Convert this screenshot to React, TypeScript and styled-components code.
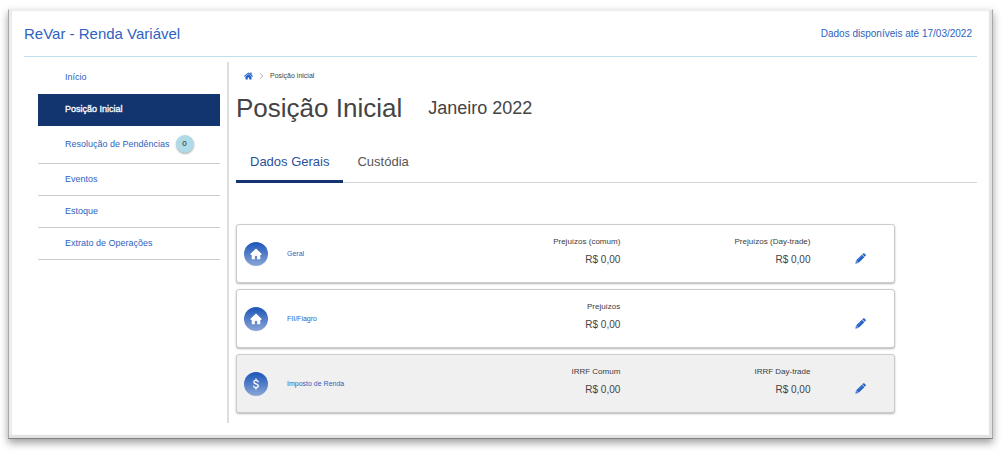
import React from "react";
import styled, { createGlobalStyle, css } from "styled-components";

const blue = "#2f62c0";
const navy = "#12356f";
const ink = "#444444";

const GlobalStyle = createGlobalStyle`
  *, *::before, *::after { box-sizing: border-box; }
  body {
    margin: 0;
    background: #ffffff;
    color: ${ink};
    font-family: "Liberation Sans", Arial, sans-serif;
  }
  h1, h2, p, ul, ol, dl, dd { margin: 0; padding: 0; font-weight: 400; }
  ul, ol { list-style: none; }
  a { color: inherit; text-decoration: none; }
  button { border: 0; padding: 0; background: none; font: inherit; color: inherit; cursor: pointer; }
`;

const Page = styled.div`
  padding: 9px 11px 12px 8px;
`;

const Frame = styled.div`
  border: 1px solid;
  border-color: #f0f0f0 #a8a8a8 #808080 #a8a8a8;
  box-shadow: inset -3px -3px 1px #e2e2e2, inset 3px 1px 1px #ececec,
    0 4px 8px rgba(0, 0, 0, 0.38);
  padding: 1px 15px 15px;
`;

const Header = styled.header`
  display: flex;
  align-items: center;
  justify-content: space-between;
  height: 46px;
  padding-right: 5px;
  border-bottom: 1px solid #bfdfeb;
  color: ${blue};
`;

const Brand = styled.h2`
  font-size: 15px;
  line-height: 20px;
`;

const Availability = styled.p`
  font-size: 10px;
  line-height: 14px;
`;

const Body = styled.div`
  display: flex;
  padding-top: 5px;
`;

const Sidebar = styled.nav`
  flex: none;
  width: 205px;
  padding: 0 7px 0 14px;
  border-right: 2px solid #dddddd;
`;

const MenuLink = styled.a<{ $active?: boolean; $tall?: boolean }>`
  display: flex;
  align-items: center;
  gap: 6px;
  height: ${(p) => (p.$tall ? 38 : 32)}px;
  padding: 0 0 2px 27px;
  border-bottom: 1px solid #cccccc;
  color: ${blue};
  font-size: 9px;
  line-height: 12px;
  ${(p) =>
    p.$active &&
    css`
      background: ${navy};
      border-color: ${navy};
      color: #ffffff;
      -webkit-text-stroke: 0.3px #ffffff;
    `}
`;

const MenuItemRow = styled.li`
  &:first-child a { border-color: transparent; }
`;

const Count = styled.span`
  display: grid;
  place-items: center;
  width: 18px;
  height: 18px;
  border-radius: 50%;
  background: #afdbe8;
  box-shadow: 0 1px 2px rgba(0, 0, 0, 0.35);
  color: #222222;
  font-size: 8px;
`;

const Content = styled.main`
  flex: 1;
  min-width: 0;
  padding: 7px 0 10px 7px;
`;

const Crumbs = styled.ol`
  display: flex;
  align-items: center;
  gap: 6px;
  height: 14px;
  padding-left: 8px;
  font-size: 7px;
  line-height: 14px;

  li, a { display: flex; align-items: center; }
`;

const TitleRow = styled.div`
  display: flex;
  align-items: center;
  gap: 26px;
  height: 50px;
`;

const Title = styled.h1`
  font-size: 26px;
  line-height: 32px;
`;

const Month = styled.p`
  font-size: 18px;
  line-height: 24px;
`;

const Tabs = styled.div`
  display: flex;
  margin-top: 10px;
  border-bottom: 1px solid #d4d4d4;
`;

const Tab = styled.button<{ $active?: boolean }>`
  height: 40px;
  margin-bottom: -1px;
  padding: 0 14px;
  border-bottom: 3px solid ${(p) => (p.$active ? navy : "transparent")};
  color: ${(p) => (p.$active ? "#2a519b" : "#555555")};
  font-size: 13px;
  line-height: 16px;
`;

const Cards = styled.ul`
  display: grid;
  gap: 6px;
  width: 89%;
  margin-top: 41px;
`;

const Card = styled.li<{ $shaded?: boolean }>`
  display: grid;
  grid-template-columns: 43px 143fr 190fr 190fr 56px;
  height: 59px;
  padding: 0 28px 0 7px;
  border: 1px solid #cccccc;
  border-radius: 3px;
  background: ${(p) => (p.$shaded ? "#f0f0f0" : "#ffffff")};
  box-shadow: 0 1px 2px rgba(0, 0, 0, 0.3);
`;

const Disc = styled.span`
  display: grid;
  place-items: center;
  align-self: center;
  width: 24px;
  height: 24px;
  border-radius: 50%;
  background: linear-gradient(#1a54b8, #8ba6d6);
`;

const CardLink = styled.a`
  align-self: center;
  color: ${blue};
  font-size: 7px;
  line-height: 12px;
`;

const Amount = styled.dl`
  padding-top: 11px;
  text-align: right;
`;

const AmountLabel = styled.dt`
  color: #3c3c3c;
  font-size: 8px;
  line-height: 12px;
`;

const AmountValue = styled.dd`
  margin-top: 4px;
  font-size: 10px;
  line-height: 16px;
`;

const EditButton = styled.button`
  justify-self: end;
  align-self: center;
  display: flex;
  padding-top: 10px;
`;

const HomeIcon = () => (
  <svg width="12" height="12" viewBox="0 0 24 24" fill="#ffffff" aria-hidden="true">
    <path d="M12 1 23.500 12 22 14H20.500V22.500H14.200V15.800H9.800V22.500H3.500V14H2L.5 12Z" />
  </svg>
);

const CrumbHomeIcon = () => (
  <svg width="9" height="8" viewBox="0 0 576 512" fill="#1f5fc8" aria-hidden="true">
    <path d="M280 148 96 300v164a16 16 0 0 0 16 16h112a16 16 0 0 0 16-16v-96a16 16 0 0 1 16-16h64a16 16 0 0 1 16 16v96a16 16 0 0 0 16 16h112a16 16 0 0 0 16-16V300L296 148a12 12 0 0 0-16 0zM572 251 488 182V44a12 12 0 0 0-12-12h-56a12 12 0 0 0-12 12v72l-90-74a48 48 0 0 0-61 0L4 251a12 12 0 0 0-1 17l25 31a12 12 0 0 0 17 2L280 107a12 12 0 0 1 16 0l235 194a12 12 0 0 0 17-2l25-31a12 12 0 0 0-1-17z" />
  </svg>
);

const ChevronIcon = () => (
  <svg width="5" height="8" viewBox="0 0 5 8" fill="none" stroke="#b5b5b5" aria-hidden="true">
    <path d="M.7 1.2 4 4 .7 6.8" />
  </svg>
);

const DollarIcon = () => (
  <svg width="12" height="12" viewBox="0 0 12 12" fill="none" stroke="#ffffff" strokeWidth="1.3" strokeLinecap="round" aria-hidden="true">
    <path d="M6 .9V2.2M6 9.8V11.1M8.2 3.8C7.9 2.8 7.1 2.4 6 2.4 4.7 2.4 3.8 3 3.8 4.1 3.8 6.4 8.3 5.4 8.3 7.8 8.3 9 7.3 9.6 6 9.6 4.8 9.6 3.9 9.1 3.6 8.1" />
  </svg>
);

const PencilIcon = () => (
  <svg width="11" height="11" viewBox="0 0 22 22" aria-hidden="true">
    <path fill="#2362c5" d="M14.500 2.500 16 1Q17.500-.3 19 1L21 3Q22.300 4.500 21 6L19.500 7.500ZM13.700 3.300 18.700 8.300 7.400 19.600 2.400 14.600Z" />
    <path fill="#4a7dd2" d="M2 15 7 20 .6 21.400Z" />
    <path fill="none" stroke="#6c96dc" strokeWidth="1" d="M5.500 14.500 13.500 6.500" />
  </svg>
);

type MenuItem = { label: string; active?: boolean; count?: number };
type CardItem = {
  name: string;
  icon: "home" | "dollar";
  shaded?: boolean;
  amounts: { label: string; value: string }[];
};

const menu: MenuItem[] = [
  { label: "Início" },
  { label: "Posição Inicial", active: true },
  { label: "Resolução de Pendências", count: 0 },
  { label: "Eventos" },
  { label: "Estoque" },
  { label: "Extrato de Operações" },
];

const cards: CardItem[] = [
  {
    name: "Geral",
    icon: "home",
    amounts: [
      { label: "Prejuízos (comum)", value: "R$ 0,00" },
      { label: "Prejuízos (Day-trade)", value: "R$ 0,00" },
    ],
  },
  { name: "FII/Fiagro", icon: "home", amounts: [{ label: "Prejuízos", value: "R$ 0,00" }] },
  {
    name: "Imposto de Renda",
    icon: "dollar",
    shaded: true,
    amounts: [
      { label: "IRRF Comum", value: "R$ 0,00" },
      { label: "IRRF Day-trade", value: "R$ 0,00" },
    ],
  },
];

export default function App() {
  return (
    <Page>
      <GlobalStyle />
      <Frame>
        <Header>
          <Brand>ReVar - Renda Variável</Brand>
          <Availability>Dados disponíveis até 17/03/2022</Availability>
        </Header>
        <Body>
          <Sidebar>
            <ul>
              {menu.map((item) => (
                <MenuItemRow key={item.label}>
                  <MenuLink
                    href="#"
                    $active={item.active}
                    $tall={item.count !== undefined}
                    aria-current={item.active ? "page" : undefined}
                  >
                    {item.label}
                    {item.count !== undefined && <Count>{item.count}</Count>}
                  </MenuLink>
                </MenuItemRow>
              ))}
            </ul>
          </Sidebar>
          <Content>
            <Crumbs>
              <li>
                <a href="#" aria-label="Início">
                  <CrumbHomeIcon />
                </a>
              </li>
              <li>
                <ChevronIcon />
              </li>
              <li>Posição inicial</li>
            </Crumbs>
            <TitleRow>
              <Title>Posição Inicial</Title>
              <Month>Janeiro 2022</Month>
            </TitleRow>
            <Tabs role="tablist">
              <Tab role="tab" aria-selected="true" $active>
                Dados Gerais
              </Tab>
              <Tab role="tab" aria-selected="false">
                Custódia
              </Tab>
            </Tabs>
            <Cards>
              {cards.map((card) => (
                <Card key={card.name} $shaded={card.shaded}>
                  <Disc>{card.icon === "home" ? <HomeIcon /> : <DollarIcon />}</Disc>
                  <CardLink href="#">{card.name}</CardLink>
                  {card.amounts.map((amount) => (
                    <Amount key={amount.label}>
                      <AmountLabel>{amount.label}</AmountLabel>
                      <AmountValue>{amount.value}</AmountValue>
                    </Amount>
                  ))}
                  {card.amounts.length < 2 && <span />}
                  <EditButton aria-label={`Editar ${card.name}`}>
                    <PencilIcon />
                  </EditButton>
                </Card>
              ))}
            </Cards>
          </Content>
        </Body>
      </Frame>
    </Page>
  );
}
